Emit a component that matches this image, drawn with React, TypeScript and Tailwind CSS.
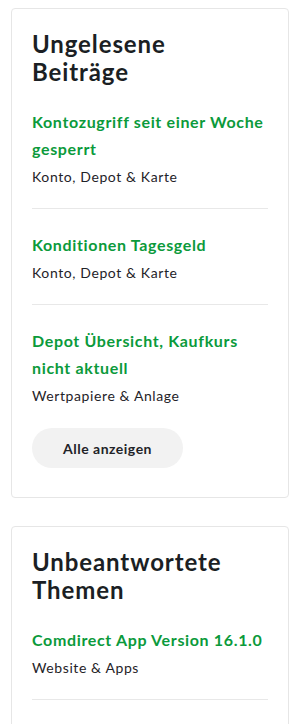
import React from "react";

type Item = { title: string; sub: string };

const unread: Item[] = [
  { title: "Kontozugriff seit einer Woche gesperrt", sub: "Konto, Depot & Karte" },
  { title: "Konditionen Tagesgeld", sub: "Konto, Depot & Karte" },
  { title: "Depot Übersicht, Kaufkurs nicht aktuell", sub: "Wertpapiere & Anlage" },
];

const unanswered: Item[] = [{ title: "Comdirect App Version 16.1.0", sub: "Website & Apps" }];

function Entry({ item, divider }: { item: Item; divider: boolean }) {
  return (
    <div className={divider ? "border-b border-[#e8e8e8] pb-[21px] mb-[22px]" : ""}>
      <a className="block text-[16px] leading-[27px] font-bold tracking-[0.65px] text-[#0b9a3b]">{item.title}</a>
      <div className="mt-[5px] text-[14px] leading-[20px] tracking-[0.6px] text-[#1f2328]">{item.sub}</div>
    </div>
  );
}

function Card({ title, items, button }: { title: string; items: Item[]; button?: boolean }) {
  return (
    <div className="w-[278px] border border-[#e6e6e6] rounded-[4px] bg-white px-[20px] pt-[21px] pb-[29px]">
      <h2 className="max-w-[205px] text-[24px] leading-[28px] font-bold tracking-[0.9px] text-[#1b1f24] mb-[22px]">
        {title}
      </h2>
      {items.map((it, i) => (
        <Entry key={i} item={it} divider={!(i === items.length - 1 && button)} />
      ))}
      {button && (
        <button className="mt-[22px] w-[151px] h-[40px] rounded-full bg-[#f2f2f2] text-[14px] font-bold tracking-[0.5px] text-[#1f2328]">
          Alle anzeigen
        </button>
      )}
    </div>
  );
}

export default function App() {
  return (
    <div
      className="bg-white min-h-[724px] pl-[11px] pt-[8px] flex flex-col gap-[28px]"
      style={{ fontFamily: "Lato, 'Noto Sans', sans-serif" }}
    >
      <Card title="Ungelesene Beiträge" items={unread} button />
      <Card title="Unbeantwortete Themen" items={unanswered} />
    </div>
  );
}
